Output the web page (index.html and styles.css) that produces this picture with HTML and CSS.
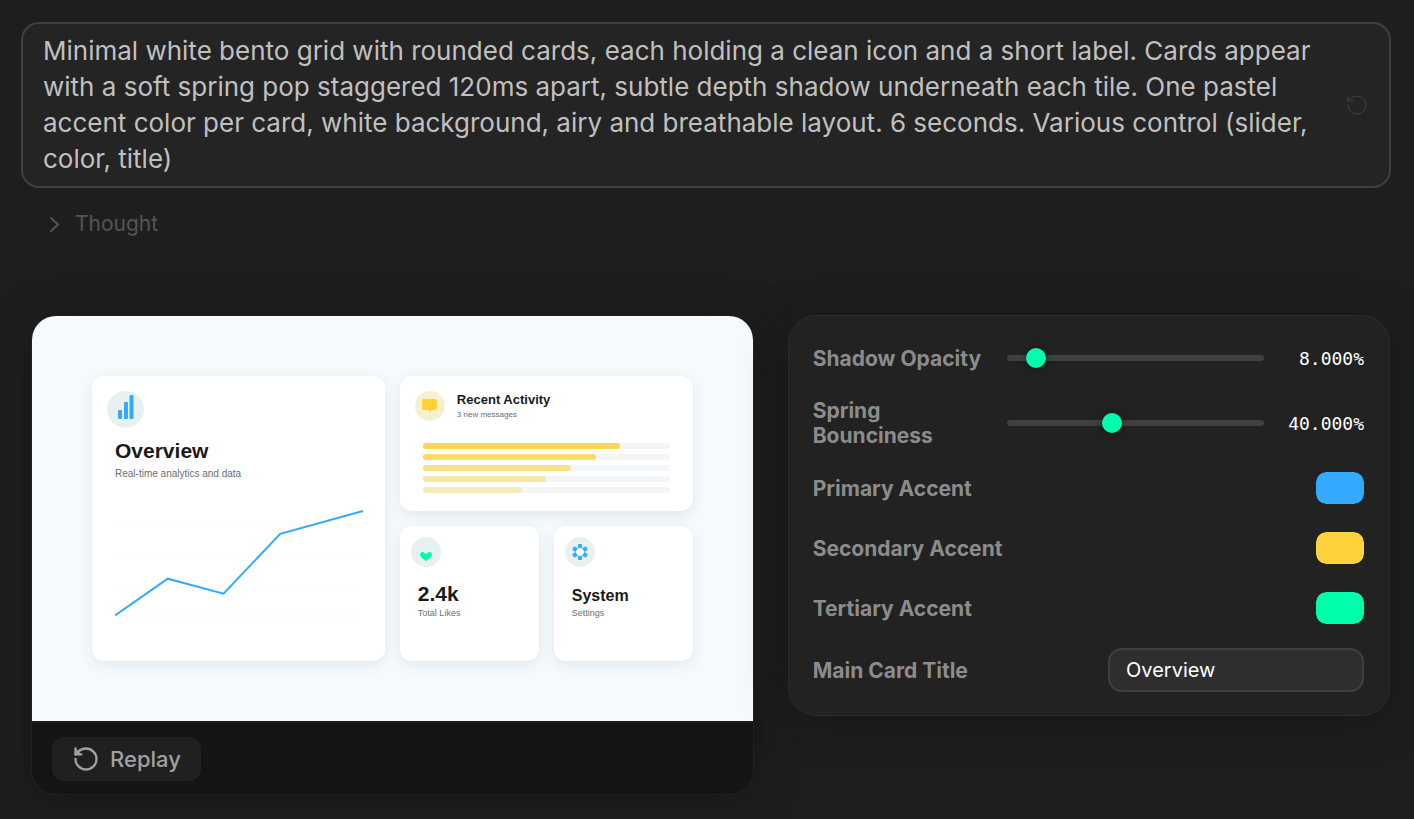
FILE: index.html
```html
<!DOCTYPE html>
<html lang="en">
<head>
    <meta charset="UTF-8">
    <meta name="viewport" content="width=device-width, initial-scale=1.0">
    <title>Bento Grid</title>
    <link rel="stylesheet" href="styles.css">
</head>
<body>

    <!-- Prompt -->
    <section class="prompt">
        <p>Minimal white bento grid with rounded cards, each holding a clean icon and a short label. Cards appear with a soft spring pop staggered 120ms apart, subtle depth shadow underneath each tile. One pastel accent color per card, white background, airy and breathable layout. 6 seconds. Various control (slider, color, title)</p>
        <button class="restore" type="button" aria-label="Restore">
            <svg viewBox="0 0 24 24" width="24" height="24"><path d="M3 12a9 9 0 1 0 9-9 9.750 9.750 0 0 0-6.740 2.740L3 8"/><path d="M3 3v5h5"/></svg>
        </button>
    </section>

    <button class="thought" type="button">
        <svg viewBox="0 0 10 16" width="10" height="16"><path d="M1 2l7 6.500-7 6.500"/></svg>
        Thought
    </button>

    <main class="result">

        <!-- Preview -->
        <section class="preview">
            <div class="stage">
                <article class="card overview">
                    <div class="icon icon-large">
                        <svg viewBox="0 0 37 37" width="37" height="37" fill="#33aaff">
                            <rect x="11" y="19" width="4" height="9" rx="1"/>
                            <rect x="17" y="11" width="4" height="17" rx="1"/>
                            <rect x="22.500" y="4" width="4" height="24" rx="1"/>
                        </svg>
                    </div>
                    <h2>Overview</h2>
                    <p>Real-time analytics and data</p>
                    <svg class="chart" viewBox="0 0 250 110">
                        <path class="grid-lines" d="M2 17.500H248M2 47.500H248M2 77.500H248M2 107.500H248"/>
                        <polyline points="0,107 53,70 109,85 166,25 249,2"/>
                    </svg>
                </article>

                <article class="card activity">
                    <header>
                        <div class="icon icon-yellow">
                            <svg viewBox="0 0 30 30" width="30" height="30" fill="#ffd23c">
                                <path d="M9 8h11a2 2 0 0 1 2 2v7a2 2 0 0 1-2 2h-3.500L15 22l-1-3H9a2 2 0 0 1-2-2v-7a2 2 0 0 1 2-2z"/>
                            </svg>
                        </div>
                        <div>
                            <h3>Recent Activity</h3>
                            <p>3 new messages</p>
                        </div>
                    </header>
                    <div class="bars">
                        <div class="bar"><span style="width: 80%; opacity: 0.9"></span></div>
                        <div class="bar"><span style="width: 70%; opacity: 0.75"></span></div>
                        <div class="bar"><span style="width: 60%; opacity: 0.6"></span></div>
                        <div class="bar"><span style="width: 50%; opacity: 0.45"></span></div>
                        <div class="bar"><span style="width: 40%; opacity: 0.3"></span></div>
                    </div>
                </article>

                <article class="card small">
                    <div class="icon">
                        <svg viewBox="0 0 30 30" width="30" height="30" fill="#00ffaa">
                            <path d="M15 24c-2-1.500-6-4-6-6.500 0-2.500 3-3.500 4.500-1.500l1.500 1 1.500-1c1.500-2 4.500-1 4.500 1.500 0 2.500-4 5-6 6.500z"/>
                        </svg>
                    </div>
                    <h2>2.4k</h2>
                    <p>Total Likes</p>
                </article>

                <article class="card small">
                    <div class="icon">
                        <svg viewBox="0 0 30 30" width="30" height="30">
                            <circle cx="15" cy="15" r="4.500" fill="#fff" stroke="#33aaff" stroke-width="1"/>
                            <g fill="#33aaff">
                                <rect id="tooth" x="13" y="7" width="4" height="4" rx="1"/>
                                <use href="#tooth" transform="rotate(60 15 15)"/>
                                <use href="#tooth" transform="rotate(120 15 15)"/>
                                <use href="#tooth" transform="rotate(180 15 15)"/>
                                <use href="#tooth" transform="rotate(240 15 15)"/>
                                <use href="#tooth" transform="rotate(300 15 15)"/>
                            </g>
                        </svg>
                    </div>
                    <h2 class="medium">System</h2>
                    <p>Settings</p>
                </article>
            </div>
            <footer>
                <button class="replay" type="button">
                    <svg viewBox="0 0 24 24" width="28" height="28"><path d="M3 12a9 9 0 1 0 9-9 9.750 9.750 0 0 0-6.740 2.740L3 8"/><path d="M3 3v5h5" fill="currentColor"/></svg>
                    Replay
                </button>
            </footer>
        </section>

        <!-- Controls -->
        <form class="controls">
            <div class="row slider">
                <label for="shadow">Shadow Opacity</label>
                <input type="range" id="shadow" min="0" max="100" value="8">
                <output for="shadow">8.000%</output>
            </div>
            <div class="row slider">
                <label for="spring">Spring Bounciness</label>
                <input type="range" id="spring" min="0" max="100" value="40">
                <output for="spring">40.000%</output>
            </div>
            <div class="row">
                <label for="primary">Primary Accent</label>
                <input type="color" id="primary" value="#33aaff">
            </div>
            <div class="row">
                <label for="secondary">Secondary Accent</label>
                <input type="color" id="secondary" value="#ffd23c">
            </div>
            <div class="row">
                <label for="tertiary">Tertiary Accent</label>
                <input type="color" id="tertiary" value="#00ffaa">
            </div>
            <div class="row">
                <label for="title">Main Card Title</label>
                <input type="text" id="title" value="Overview">
            </div>
        </form>

    </main>

</body>
</html>
```
FILE: styles.css
```css
* {
    box-sizing: border-box;
}
body {
    margin: 0;
    padding: 22px 23px 24px 21px;
    background: #1e1e1e;
    color: #c0c0c0;
    font-family: Inter, sans-serif;
}
h2, h3, p {
    margin: 0;
}
button, input {
    font-family: inherit;
}
button {
    padding: 0;
    border: none;
    background: none;
    cursor: pointer;
}
button svg {
    fill: none;
    stroke: currentColor;
    stroke-width: 2;
    stroke-linecap: round;
    stroke-linejoin: round;
}

/* Prompt */
.prompt {
    display: flex;
    align-items: center;
    gap: 24px;
    padding: 9px 20px;
    border: 2px solid #404040;
    border-radius: 18px;
    background: #242424;
}
.prompt p {
    flex: 1;
    font-size: 26px;
    line-height: 36px;
}
.restore {
    height: 24px;
    color: #404040;
}
.restore svg {
    stroke-width: 1;
}
.thought {
    display: flex;
    align-items: center;
    gap: 15px;
    margin: 21px 0 0 29px;
    color: #555;
    font-size: 21px;
    line-height: 30px;
}

/* Result */
.result {
    display: grid;
    grid-template-columns: 6fr 5fr;
    gap: 34px;
    align-items: start;
    margin: 76px 1px 0 10px;
}
.preview {
    border: 1px solid #222;
    border-radius: 25px;
    background: #141414;
    box-shadow: 0 6px 40px rgba(10, 20, 15, 0.5);
    overflow: hidden;
}
.stage {
    display: grid;
    grid-template-columns: repeat(4, 1fr);
    grid-template-rows: repeat(2, 1fr);
    gap: 15px;
    aspect-ratio: 16 / 9;
    padding: 60px;
    background: #f6fafd;
    color: #1a1a1a;
    font-family: "Liberation Sans", Arial, sans-serif;
}
.preview footer {
    padding: 14px 20px 13px;
    border-top: 2px solid #1c1c1c;
}
.replay {
    display: flex;
    align-items: center;
    gap: 10px;
    height: 44px;
    padding: 0 20px;
    border-radius: 12px;
    background: #202020;
    color: #a0a0a0;
    font-size: 22px;
    font-weight: 500;
}

/* Cards */
.card {
    min-width: 0;
    border-radius: 12px;
    background: #fff;
    box-shadow: 0 4px 14px rgba(20, 80, 80, 0.1);
}
.card h2 {
    font-size: 21px;
    line-height: 26px;
}
.card h2.medium {
    padding-top: 4px;
    font-size: 16px;
    line-height: 22px;
}
.card p {
    color: #6b6f70;
}
.icon {
    width: 30px;
    height: 30px;
    border-radius: 50%;
    background: #e8f0f2;
}
.icon svg {
    display: block;
}
.icon-large {
    width: 37px;
    height: 37px;
    margin-left: -8px;
}
.icon-yellow {
    background: #f7efd2;
}
.overview {
    grid-column: span 2;
    grid-row: span 2;
    padding: 15px 21px 15px 23px;
}
.overview h2 {
    margin-top: 10px;
}
.overview p {
    margin-top: 3px;
    font-size: 10px;
    line-height: 14px;
}
.chart {
    display: block;
    width: 100%;
    margin-top: 28px;
}
.chart polyline {
    fill: none;
    stroke: #33aaff;
    stroke-width: 2;
}
.grid-lines {
    stroke: #f9fafb;
}
.activity {
    grid-column: span 2;
    padding: 15px;
}
.activity header {
    display: flex;
    gap: 12px;
}
.activity h3 {
    font-size: 13px;
    line-height: 18px;
}
.activity p {
    font-size: 8px;
    line-height: 12px;
}
.bars {
    display: grid;
    gap: 5px;
    margin-top: 22px;
    padding: 0 8px;
}
.bar {
    height: 6px;
    border-radius: 3px;
    background: #f2f6f8;
}
.bar span {
    display: block;
    height: 100%;
    border-radius: 3px;
    background: #ffd23c;
}
.small {
    padding: 11px;
}
.small h2 {
    margin: 14px 7px 0;
}
.small p {
    margin: 0 7px;
    font-size: 9px;
    line-height: 12px;
}

/* Controls */
.controls {
    display: grid;
    gap: 20px;
    padding: 22px 25px 23px 24px;
    border: 1px solid #2c2c2c;
    border-radius: 28px;
    background: #222;
    box-shadow: 0 6px 40px rgba(10, 20, 15, 0.5);
}
.row {
    display: flex;
    align-items: center;
    justify-content: space-between;
    gap: 24px;
    min-height: 40px;
}
label {
    color: #8c8c8c;
    font-size: 21px;
    font-weight: 700;
    line-height: 25px;
}
.slider label {
    flex: 0 0 170px;
}
output {
    width: 76px;
    color: #fff;
    font-family: "DejaVu Sans Mono", monospace;
    font-size: 18px;
    text-align: right;
}
input[type="range"] {
    flex: 1;
    min-width: 0;
    height: 20px;
    margin: 0;
    background: none;
    appearance: none;
}
input[type="range"]::-webkit-slider-runnable-track {
    height: 6px;
    border-radius: 3px;
    background: #404040;
}
input[type="range"]::-webkit-slider-thumb {
    width: 20px;
    height: 20px;
    margin-top: -7px;
    border-radius: 50%;
    background: #00ffaa;
    box-shadow: 0 0 8px rgba(0, 0, 0, 0.4);
    appearance: none;
}
input[type="color"] {
    width: 48px;
    height: 32px;
    padding: 0;
    border: none;
    border-radius: 10px;
    background: none;
    overflow: hidden;
    appearance: none;
}
input[type="color"]::-webkit-color-swatch-wrapper {
    padding: 0;
}
input[type="color"]::-webkit-color-swatch {
    border: none;
    border-radius: 10px;
}
input[type="text"] {
    width: 256px;
    height: 44px;
    padding: 0 16px;
    border: 2px solid #404040;
    border-radius: 14px;
    background: #2e2e2e;
    color: #fff;
    font-size: 20px;
}
```
